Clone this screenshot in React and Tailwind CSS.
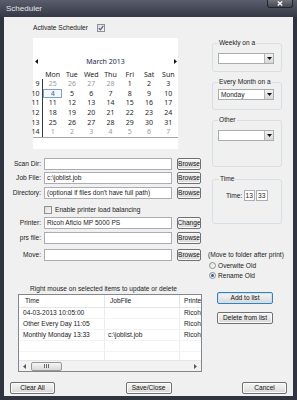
import React from "react";

const T = "text-[6.6px] leading-[8px] text-[#1a1a1a] whitespace-nowrap";

function Btn({ children, className = "", primary = false }) {
  return (
    <div
      className={`${className} h-[12px] shrink-0 rounded-[2px] border ${
        primary
          ? "border-[#3c7fb1] shadow-[inset_0_0_0_1px_#c4e5f6]"
          : "border-[#707070] shadow-[inset_0_0_0_1px_#fbfbfb]"
      } bg-linear-to-b from-[#f4f4f4] via-[#e9e9e9] to-[#d6d6d6] flex items-center justify-center whitespace-nowrap overflow-hidden text-[6.6px] leading-none text-[#111]`}
    >
      {children}
    </div>
  );
}

function Check({ checked, className = "" }) {
  return (
    <div
      className={`${className} w-[8px] h-[8px] shrink-0 border border-[#8f8f8f] bg-linear-to-br from-[#dcdcdc] to-[#f8f8f8] flex items-center justify-center`}
    >
      {checked && (
        <svg width="6" height="6" viewBox="0 0 6 6">
          <path d="M0.8 3.2L2.4 4.8L5.3 0.8" fill="none" stroke="#4a5f97" strokeWidth="1.2" />
        </svg>
      )}
    </div>
  );
}

function Field({ label, value = "", btn = "Browse", mt }) {
  return (
    <div className={`${mt} flex items-center h-[12px]`}>
      <div className={`w-[37px] text-right ${T}`}>{label}</div>
      <div className="ml-[3px] w-[128px] h-[12px] bg-white border border-[#abadb3] flex items-center pl-[2px] overflow-hidden">
        <span className={T}>{value}</span>
      </div>
      <Btn className="ml-[5px] w-[24px]">{btn}</Btn>
    </div>
  );
}

function Calendar() {
  const days = ["Mon", "Tue", "Wed", "Thu", "Fri", "Sat", "Sun"];
  const weeks = [
    { n: 9, d: ["25", "26", "27", "28", "1", "2", "3"], grey: [0, 1, 2, 3] },
    { n: 10, d: ["4", "5", "6", "7", "8", "9", "10"], grey: [] },
    { n: 11, d: ["11", "12", "13", "14", "15", "16", "17"], grey: [] },
    { n: 12, d: ["18", "19", "20", "21", "22", "23", "24"], grey: [] },
    { n: 13, d: ["25", "26", "27", "28", "29", "30", "31"], grey: [] },
    { n: 14, d: ["1", "2", "3", "4", "5", "6", "7"], grey: [0, 1, 2, 3, 4, 5, 6] },
  ];
  return (
    <div className="mt-[6px] ml-[29px] w-[145px] h-[111px] bg-white flex flex-col font-['Noto_Sans',sans-serif] text-[7px] leading-none text-[#1e1e1e]">
      <div className="mt-[18px] h-[10px] flex items-center justify-between px-[1.5px]">
        <svg width="3" height="5" viewBox="0 0 3 5">
          <path d="M3 0V5L0 2.5Z" fill="#111" />
        </svg>
        <span className="text-[#1b2a4e]">March 2013</span>
        <svg width="3" height="5" viewBox="0 0 3 5">
          <path d="M0 0V5L3 2.5Z" fill="#111" />
        </svg>
      </div>
      <div className="mt-[3px] h-[10px] grid grid-cols-[10px_repeat(7,minmax(0,1fr))] items-center">
        <div />
        {days.map((d) => (
          <div key={d} className="text-center">
            {d}
          </div>
        ))}
      </div>
      {weeks.map((w) => (
        <div key={w.n} className="h-[9.6px] grid grid-cols-[10px_repeat(7,minmax(0,1fr))]">
          <div className="text-right pr-[2.5px] border-r border-[#3a3a3a] flex items-center justify-end">{w.n}</div>
          {w.d.map((d, i) => {
            const sel = w.n === 10 && i === 0;
            return (
              <div
                key={i}
                className={`flex items-center justify-center ${
                  w.grey.includes(i) ? "text-[#9a9a9a]" : sel ? "text-[#2b62b0]" : ""
                } ${sel ? "border border-[#7da2ce] bg-[#f3f8fd]" : ""}`}
              >
                {d}
              </div>
            );
          })}
        </div>
      ))}
      <div className="mt-[0.5px] border-t border-[#a7a7a7]" />
    </div>
  );
}

function Group({ label, className = "", labelMl = "ml-[5px]", children }) {
  return (
    <div className={`${className} ml-[8px] w-[70px] shrink-0 border border-[#d5dfe5] rounded-[3px] flex flex-col`}>
      <div className={`-mt-[5px] ${labelMl} self-start px-[1px] bg-[#f0f0f0] ${T}`}>{label}</div>
      {children}
    </div>
  );
}

function Select({ value = "", className = "" }) {
  return (
    <div className={`${className} ml-[5px] w-[56px] h-[11px] bg-white border border-[#acacac] flex`}>
      <div className="flex-1 pl-[2px] flex items-center">
        <span className={T}>{value}</span>
      </div>
      <div className="w-[9px] border-l border-[#b5b5b5] bg-linear-to-b from-[#f2f2f2] to-[#d8d8d8] flex items-center justify-center">
        <svg width="5" height="3" viewBox="0 0 5 3">
          <path d="M0 0H5L2.5 3Z" fill="#111" />
        </svg>
      </div>
    </div>
  );
}

function Radio({ label, checked, className = "" }) {
  return (
    <div className={`${className} ml-[5px] flex items-center h-[7px]`}>
      <div className="w-[7px] h-[7px] rounded-full border border-[#8e8f8f] bg-linear-to-br from-[#dedede] to-[#fcfcfc] flex items-center justify-center">
        {checked && <div className="w-[3px] h-[3px] rounded-full bg-[#2d5fa6]" />}
      </div>
      <span className={`ml-[2px] ${T}`}>{label}</span>
    </div>
  );
}

function List() {
  const rows = [
    ["04-03-2013 10:05:00", "", "Ricoh"],
    ["Other Every Day 11:05", "", "Ricoh"],
    ["Monthly Monday 13:33", "c:\\joblist.job", "Ricoh"],
  ];
  return (
    <div className="mt-[1px] ml-[14px] w-[184px] h-[78px] shrink-0 bg-white border border-[#828790] flex flex-col overflow-hidden">
      <div className="h-[13px] shrink-0 flex border-b border-[#e5e5e5]">
        <div className="w-[86px] border-r border-[#e5e5e5] pl-[6px] flex items-center">
          <span className={T}>Time</span>
        </div>
        <div className="w-[75px] border-r border-[#e5e5e5] pl-[5px] flex items-center">
          <span className={T}>JobFile</span>
        </div>
        <div className="flex-1 pl-[4px] flex items-center overflow-hidden">
          <span className={T}>Printer</span>
        </div>
      </div>
      {rows.map((r, i) => (
        <div key={i} className="h-[11px] shrink-0 flex border-b border-[#f3f3f3]">
          <div className="w-[86px] border-r border-[#ececec] pl-[4px] flex items-center">
            <span className={T}>{r[0]}</span>
          </div>
          <div className="w-[75px] border-r border-[#ececec] pl-[3px] flex items-center">
            <span className={T}>{r[1]}</span>
          </div>
          <div className="flex-1 pl-[4px] flex items-center overflow-hidden">
            <span className={T}>{r[2]}</span>
          </div>
        </div>
      ))}
      <div className="h-[11px] shrink-0 flex border-b border-[#f3f3f3]">
        <div className="w-[86px] border-r border-[#ececec]" />
        <div className="w-[75px] border-r border-[#ececec]" />
      </div>
      <div className="flex-1 flex">
        <div className="w-[86px] border-r border-[#ececec]" />
        <div className="w-[75px] border-r border-[#ececec]" />
      </div>
      <div className="h-[11px] shrink-0 flex items-center bg-[#f2f2f2] border-t border-[#e6e6e6]">
        <div className="w-[11px] flex justify-center">
          <svg width="3" height="5" viewBox="0 0 3 5">
            <path d="M3 0V5L0 2.5Z" fill="#5a5a5a" />
          </svg>
        </div>
        <div className="ml-[1px] w-[31px] h-[9px] rounded-[2px] border border-[#979797] bg-linear-to-b from-[#f5f5f5] to-[#d9d9d9] flex items-center justify-center gap-[1px]">
          <div className="w-[1px] h-[4px] bg-[#6a6a6a]" />
          <div className="w-[1px] h-[4px] bg-[#6a6a6a]" />
          <div className="w-[1px] h-[4px] bg-[#6a6a6a]" />
        </div>
        <div className="ml-auto w-[11px] flex justify-center">
          <svg width="3" height="5" viewBox="0 0 3 5">
            <path d="M0 0V5L3 2.5Z" fill="#5a5a5a" />
          </svg>
        </div>
      </div>
    </div>
  );
}

export default function App() {
  return (
    <div className="w-[297px] h-[400px] bg-[#30343f] flex flex-col font-['Liberation_Sans',Arial,sans-serif] overflow-hidden">
      <div className="h-[17px] shrink-0 flex items-start bg-linear-to-b from-[#5a5e6c] to-[#353946]">
        <span className="ml-[6px] mt-[4px] text-[8px] leading-[10px] text-[#e6e6ea]">Scheduler</span>
        <div className="ml-auto mr-[4px] w-[26px] h-[8px] rounded-b-[3px] border border-t-0 border-[#22252d] bg-linear-to-b from-[#70737d] to-[#46484f] flex items-center justify-center">
          <svg width="6" height="5" viewBox="0 0 6 5">
            <path d="M0.8 0.5L5.2 4.5M5.2 0.5L0.8 4.5" stroke="#fff" strokeWidth="1.3" />
          </svg>
        </div>
      </div>
      <div className="mx-[4px] h-[379px] shrink-0 bg-[#f0f0f0] flex flex-col">
        <div className="flex h-[355px] shrink-0">
          <div className="w-[200px] shrink-0 flex flex-col">
            <div className="mt-[7px] ml-[29px] flex items-center h-[8px]">
              <span className={T}>Activate Scheduler</span>
              <Check className="ml-[9px]" checked />
            </div>
            <Calendar />
            <Field mt="mt-[9px]" label="Scan Dir:" />
            <Field mt="mt-[2px]" label="Job File:" value={"c:\\joblist.job"} />
            <Field mt="mt-[3px]" label="Directory:" value="(optional if files don't have full path)" />
            <div className="mt-[7px] ml-[40px] flex items-center h-[8px]">
              <Check />
              <span className={`ml-[3px] ${T}`}>Enable printer load balancing</span>
            </div>
            <Field mt="mt-[3px]" label="Printer:" value="Ricoh Aficio MP 5000 PS" btn="Change" />
            <Field mt="mt-[3px]" label="prs file:" />
            <Field mt="mt-[5px]" label="Move:" />
            <div className={`mt-[24px] ml-[26px] ${T}`}>Right mouse on selected items to update or delete</div>
            <List />
          </div>
          <div className="w-[89px] shrink-0 flex flex-col">
            <Group className="mt-[26px] h-[29px]" label="Weekly on a">
              <Select className="mt-[6px]" />
            </Group>
            <Group className="mt-[10px] h-[28px]" label="Every Month on a">
              <Select className="mt-[3px]" value="Monday" />
            </Group>
            <Group className="mt-[10px] h-[47px]" label="Other">
              <Select className="mt-[6px]" />
            </Group>
            <Group className="mt-[12px] h-[45px]" label="Time" labelMl="ml-[6px]">
              <div className="mt-[7px] ml-[13px] flex items-center">
                <span className={T}>Time:</span>
                <div className="ml-[1.5px] w-[11px] h-[11px] bg-white border border-[#abadb3] flex items-center justify-center">
                  <span className={T}>13</span>
                </div>
                <div className="ml-[1px] w-[12px] h-[11px] bg-white border border-[#abadb3] flex items-center justify-center">
                  <span className={T}>33</span>
                </div>
              </div>
            </Group>
            <div className={`mt-[27px] ml-[4px] ${T}`}>(Move to folder after print)</div>
            <Radio className="mt-[3px]" label="Overwite Old" />
            <Radio className="mt-[3px]" label="Rename Old" checked />
            <Btn primary className="mt-[13px] ml-[13px] w-[56px]">
              Add to list
            </Btn>
            <Btn className="mt-[8px] ml-[13px] w-[56px]">Delete from list</Btn>
          </div>
        </div>
        <div className="mt-[10px] flex justify-between px-[6px]">
          <Btn className="w-[45px]">Clear All</Btn>
          <Btn className="w-[46px]">Save/Close</Btn>
          <Btn className="w-[45px]">Cancel</Btn>
        </div>
      </div>
    </div>
  );
}
